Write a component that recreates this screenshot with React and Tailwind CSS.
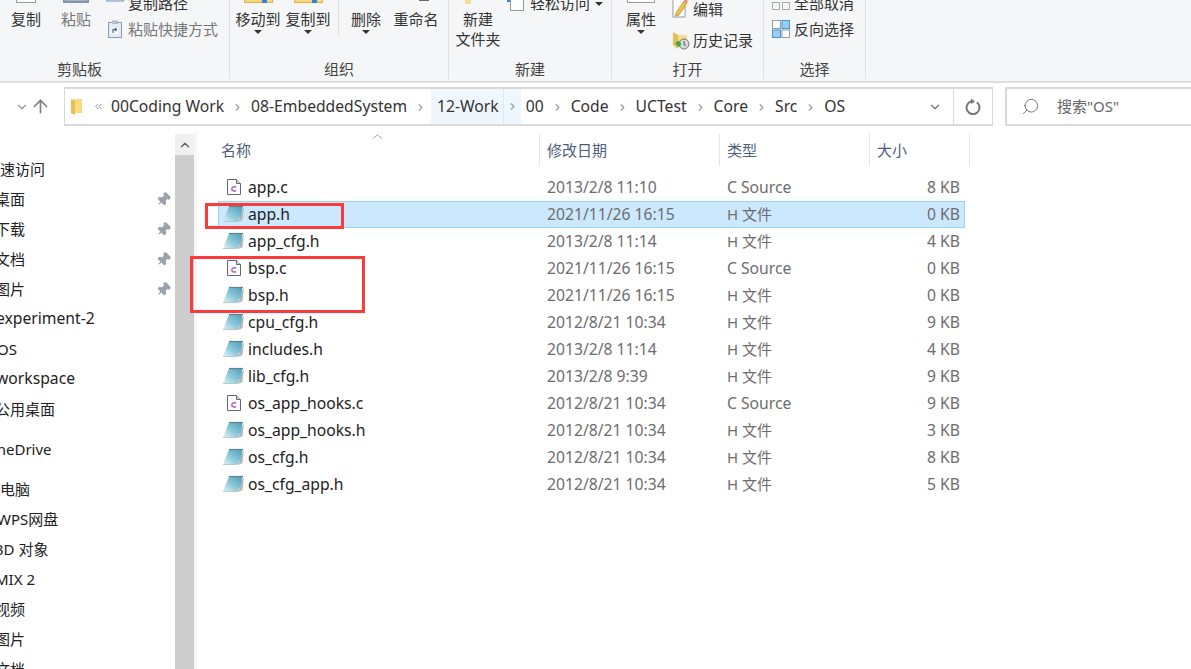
import React from 'react';
import { ArrowUp, ChevronDown, ChevronRight, ChevronUp, ChevronsLeft, Search, Pin } from 'lucide-react';

const files = [
  ['app.c', '2013/2/8 11:10', 'C Source', '8 KB'],
  ['app.h', '2021/11/26 16:15', 'H 文件', '0 KB'],
  ['app_cfg.h', '2013/2/8 11:14', 'H 文件', '4 KB'],
  ['bsp.c', '2021/11/26 16:15', 'C Source', '0 KB'],
  ['bsp.h', '2021/11/26 16:15', 'H 文件', '0 KB'],
  ['cpu_cfg.h', '2012/8/21 10:34', 'H 文件', '9 KB'],
  ['includes.h', '2013/2/8 11:14', 'H 文件', '4 KB'],
  ['lib_cfg.h', '2013/2/8 9:39', 'H 文件', '9 KB'],
  ['os_app_hooks.c', '2012/8/21 10:34', 'C Source', '9 KB'],
  ['os_app_hooks.h', '2012/8/21 10:34', 'H 文件', '3 KB'],
  ['os_cfg.h', '2012/8/21 10:34', 'H 文件', '8 KB'],
  ['os_cfg_app.h', '2012/8/21 10:34', 'H 文件', '5 KB'],
];

// name, left offset + size, pinned, extra gap above
const navItems = [
  ['快速访问', 'ml-[-15px]', false, ''],
  ['桌面', 'ml-[-5px]', true, ''],
  ['下载', 'ml-[-5px]', true, ''],
  ['文档', 'ml-[-5px]', true, ''],
  ['图片', 'ml-[-5px]', true, ''],
  ['experiment-2', 'ml-[-4px] text-[15.7px]', false, ''],
  ['OS', 'ml-[-3px]', false, ''],
  ['workspace', 'ml-[-4px] text-[15.7px]', false, ''],
  ['公用桌面', 'ml-[-5px]', false, ''],
  ['OneDrive', 'ml-[-15px]', false, 'mt-[10px]'],
  ['此电脑', 'ml-[-15px]', false, 'mt-[10px]'],
  ['WPS网盘', 'ml-[-3px]', false, ''],
  ['3D 对象', 'ml-[-5px]', false, ''],
  ['MIX 2', 'ml-[-5px]', false, ''],
  ['视频', 'ml-[-5px]', false, ''],
  ['图片', 'ml-[-5px]', false, ''],
  ['文档', 'ml-[-5px]', false, ''],
];

const crumbs = ['00Coding Work', '08-EmbeddedSystem', '12-Work', '00', 'Code', 'UCTest', 'Core', 'Src', 'OS'];

function CFileIcon() {
  return (
    <svg width="16" height="18" viewBox="0 0 16 18" className="shrink-0">
      <path d="M1.5 1.5H10.5L14.5 5.5V16.5H1.5Z" fill="#fbfbfd" stroke="#66666e" />
      <path d="M10.5 1.5V5.5H14.5" fill="#dcdce2" stroke="#66666e" />
      <path d="M10 9.2C8.4 8.3 5.8 8.8 5.8 10.9C5.8 13 8.4 13.5 10 12.6" fill="none" stroke="#a45fb8" strokeWidth="1.4" />
    </svg>
  );
}

function HFileIcon({ id }) {
  return (
    <svg width="23" height="18" viewBox="0 0 23 18" className="shrink-0">
      <defs>
        <linearGradient id={id} x1="0" y1="1" x2="1" y2="0">
          <stop offset="0" stopColor="#e2f3f7" />
          <stop offset="0.45" stopColor="#8cc9da" />
          <stop offset="1" stopColor="#4d9db9" />
        </linearGradient>
      </defs>
      <path d="M22 2L20.5 15L17 17L16 11Z" fill="#b4babd" />
      <path d="M7 1.5H20.5L18.5 12.5L15.5 16.5H1Z" fill={`url(#${id})`} />
      <path d="M15.5 16.5L16.5 12.5L18.5 12.5Z" fill="#f4f6f6" stroke="#9aa5a9" strokeWidth="0.5" />
      <path d="M7 1.5H21" stroke="#66808a" strokeWidth="1.2" />
      <path d="M1 16.5H15.5" stroke="#a9c0c8" strokeWidth="0.8" />
    </svg>
  );
}

function Caret() {
  return <span className="block w-0 h-0 border-x-[4px] border-x-transparent border-t-[4px] border-t-[#333]" />;
}

// big ribbon button, the window is cropped so only the icon's bottom edge shows
function BigButton({ label, width, caret, icon }) {
  return (
    <div className={`flex flex-col items-center ${width}`}>
      <div className="h-[9px] mt-[-6px] flex justify-center">{icon}</div>
      <span className="leading-[20px] mt-[6px] whitespace-nowrap">{label}</span>
      {caret && <span className="mt-[1px]"><Caret /></span>}
    </div>
  );
}

function FolderEdge() {
  return (
    <div className="relative w-[29px] h-[9px] bg-[#fad978] border border-[#dcb04e]">
      <span className="absolute right-[5px] top-[2px] w-[5px] h-[6px] bg-[#2f86d8]" />
    </div>
  );
}

function RibbonGroup({ label, width, labelClass, children }) {
  return (
    <div className={`flex flex-col h-[79px] border-r border-[#dfe0e1] ${width}`}>
      <div className="h-[59px] flex overflow-hidden">{children}</div>
      <div className={`text-center text-[15px] leading-[20px] text-[#444] ${labelClass || ''}`}>{label}</div>
    </div>
  );
}

function Ribbon() {
  return (
    <div className="h-[83px] flex bg-[#f5f6f7] border-b-2 border-[#dedfe0] text-[15px] text-[#333]">
      <RibbonGroup label="剪贴板" width="w-[230px]" labelClass="pr-[70px]">
        <div className="w-[52px] flex justify-center">
          <BigButton label="复制" width="w-[30px]" icon={<div className="w-[20px] bg-white border border-[#999]" />} />
        </div>
        <div className="w-[48px] flex justify-center text-[#777]">
          <BigButton label="粘贴" width="w-[30px]" icon={<div className="w-[26px] bg-[#a9b3c6] border-2 border-[#8593ad]" />} />
        </div>
        <div className="ml-[6px] flex flex-col gap-[6px] mt-[-7px]">
          <div className="flex items-center gap-[4px] h-[20px]">
            <svg width="18" height="20" viewBox="0 0 18 20">
              <rect x="0.5" y="-6" width="17" height="14" fill="#dbe8f5" stroke="#7d97b5" />
              <path d="M4.5 2L7 7M8 2L10.5 7M12 6.5H15" stroke="#334" />
            </svg>
            <span>复制路径</span>
          </div>
          <div className="flex items-center gap-[4px] h-[20px] text-[#777]">
            <div className="w-[18px] flex justify-center">
              <svg width="14" height="18" viewBox="0 0 14 18">
                <rect x="0.5" y="2.5" width="13" height="15" fill="#e5ebf3" stroke="#8b9bb3" />
                <rect x="4" y="0.5" width="6" height="3.5" fill="#b3bccb" />
                <rect x="3.5" y="7" width="7" height="7" fill="#fff" />
                <path d="M5 13V9.5H9M9 9.5L7 8M9 9.5L7 11" fill="none" stroke="#5b6f8e" strokeWidth="1.3" />
              </svg>
            </div>
            <span>粘贴快捷方式</span>
          </div>
        </div>
      </RibbonGroup>
      <RibbonGroup label="组织" width="w-[219px]">
        <div className="pl-[6px] flex gap-[6px]">
          <BigButton label="移动到" width="w-[44px]" caret icon={<FolderEdge />} />
          <BigButton label="复制到" width="w-[44px]" caret icon={<FolderEdge />} />
        </div>
        <div className="ml-[8px] w-px h-[35px] bg-[#dfe0e1]" />
        <div className="ml-[12px]">
          <BigButton
            label="删除"
            width="w-[30px]"
            caret
            icon={
              <div className="w-[24px] flex justify-between items-end h-[8px] mt-[-6px]">
                <span className="w-[2px] h-[2px] bg-[#b3243a]" />
                <span className="w-[2px] h-[2px] bg-[#b3243a]" />
              </div>
            }
          />
        </div>
        <div className="ml-[13px]">
          <BigButton
            label="重命名"
            width="w-[44px]"
            icon={<div className="w-[10px] h-[2px] mt-[5px] ml-[16px] bg-[#666]" />}
          />
        </div>
      </RibbonGroup>
      <RibbonGroup label="新建" width="w-[163px]">
        <div className="w-[58px] flex flex-col items-center leading-[20px] relative">
          <span className="absolute left-[16px] top-0 w-[6px] h-[4px] bg-[#f7dd93]" />
          <span className="mt-[9px]">新建</span>
          <span>文件夹</span>
        </div>
        <div className="ml-[3px] flex items-start gap-[6px]">
          <span className="relative w-[14px] h-[11px] bg-white border border-[#999] border-t-0">
            <span className="absolute left-[-4px] top-0 w-[3px] h-[2px] bg-[#2f86d8]" />
          </span>
          <span className="mt-[-7px] leading-[20px] whitespace-nowrap">轻松访问</span>
          <span className="mt-[2px] ml-[-1px]"><Caret /></span>
        </div>
      </RibbonGroup>
      <RibbonGroup label="打开" width="w-[152px]">
        <div className="pl-[14px]">
          <BigButton label="属性" width="w-[30px]" caret icon={<div className="w-[28px] bg-white border border-[#999]" />} />
        </div>
        <div className="ml-[16px] flex flex-col gap-[9px]">
          <div className="flex gap-[5px] items-start h-[20px]">
            <svg width="16" height="18" viewBox="0 0 16 18">
              <path d="M1 -1H13V17H1Z" fill="#fff" stroke="#999" />
              <path d="M4 13L12 1L15 3L7 15L3.5 16Z" fill="#f2c04c" stroke="#b3862b" strokeWidth="0.7" />
              <path d="M12 1L13 -1L16 1L15 3Z" fill="#e58a8a" />
            </svg>
            <span className="leading-[18px]">编辑</span>
          </div>
          <div className="flex gap-[3px] items-center h-[20px] mt-[1px]">
            <svg width="18" height="19" viewBox="0 0 18 19">
              <path d="M1 1L6 4V18L1 14Z" fill="#e8bd55" />
              <path d="M6 4H15V12H6Z" fill="#f8dc8a" />
              <circle cx="12" cy="13" r="5" fill="#d8dadb" stroke="#777" />
              <path d="M12 10V13.5L14 14.5" fill="none" stroke="#555" />
              <path d="M3 12L7 9.5V11.5H9V14.5H7V16.5Z" fill="#3ea63a" />
            </svg>
            <span>历史记录</span>
          </div>
        </div>
      </RibbonGroup>
      <RibbonGroup label="选择" width="w-[102px]">
        <div className="ml-[8px] flex flex-col gap-[6px] mt-[-7px]">
          <div className="flex items-center gap-[4px] h-[20px]">
            <span className="flex gap-[2px] w-[18px] h-[8px] self-end mb-[3px]">
              <i className="w-[8px] border border-[#aaa]" />
              <i className="w-[8px] border border-[#aaa]" />
            </span>
            <span>全部取消</span>
          </div>
          <div className="flex items-center gap-[4px] h-[20px]">
            <svg width="18" height="18" viewBox="0 0 18 18">
              <rect x="0.5" y="0.5" width="8" height="8" fill="#fff" stroke="#9a9a9a" />
              <rect x="10" y="0.5" width="7.5" height="8" fill="#9fcdf2" stroke="#3b97e0" />
              <rect x="0.5" y="10" width="8" height="7.5" fill="#9fcdf2" stroke="#3b97e0" />
              <rect x="10" y="10" width="7.5" height="7.5" fill="#fff" stroke="#9a9a9a" />
            </svg>
            <span>反向选择</span>
          </div>
        </div>
      </RibbonGroup>
    </div>
  );
}

function AddressRow() {
  return (
    <div className="h-[49px] flex items-start pt-[4px] bg-white">
      <div className="w-[64px] h-[39px] flex items-center shrink-0">
        <ChevronDown size={14} strokeWidth={2.2} className="ml-[15px] text-[#999]" />
        <ArrowUp size={21} strokeWidth={1.9} className="ml-[1px] text-[#808080]" />
      </div>
      <div className="w-[929px] h-[39px] flex border-2 border-[#d9d9d9] border-x-0 shrink-0">
        <div className="flex-1 flex items-center border-l border-[#d9d9d9] min-w-0">
          <svg width="13" height="18" viewBox="0 0 13 18" className="ml-[5px] shrink-0">
            <path d="M3 1H12V15H3Z" fill="#f9dc82" />
            <path d="M1 1L5 3V17L1 15Z" fill="#e8bf52" />
          </svg>
          <ChevronsLeft size={11} strokeWidth={2} className="ml-[10px] text-[#888]" />
          <div className="ml-[7px] flex items-stretch h-full text-[15.7px] text-[#333] whitespace-nowrap pt-[1px]">
            {crumbs.map((c, i) => {
              const hot = c === '12-Work';
              return (
                <div key={c} className={`flex items-center ${hot ? 'bg-[#eff7fe] ml-[-3px] mr-[5px] mt-[-1px]' : ''}`}>
                  <span className={`flex items-center h-full ${hot ? 'pl-[6px] pr-[4px] border-r border-[#d9ebf9]' : ''}`}>{c}</span>
                  {i < crumbs.length - 1 && (
                    <ChevronRight
                      size={11}
                      strokeWidth={2.4}
                      className={`text-[#999] ${hot ? 'mx-[3px]' : 'mx-[8px]'}`}
                    />
                  )}
                </div>
              );
            })}
          </div>
        </div>
        <div className="w-[38px] flex items-center justify-center border-r border-[#d9d9d9] shrink-0">
          <ChevronDown size={14} strokeWidth={2.2} className="text-[#777]" />
        </div>
        <div className="w-[39px] flex items-center justify-center border-r border-[#d9d9d9] shrink-0">
          <svg width="18" height="18" viewBox="0 0 18 18" fill="none">
            <path d="M12.8 4.2A6.5 6.5 0 1 1 7.5 3.2" stroke="#777" strokeWidth="2" />
            <path d="M7 0.5L11 3.4L7 6Z" fill="#777" />
          </svg>
        </div>
      </div>
      <div className="ml-[12px] flex-1 h-[39px] flex items-center border-2 border-r-0 border-[#d9d9d9] text-[15px] text-[#666]">
        <Search size={19} strokeWidth={1.1} className="ml-[14px] text-[#666] -scale-x-100" />
        <span className="ml-[17px]">搜索"OS"</span>
      </div>
    </div>
  );
}

function Sidebar() {
  return (
    <div className="w-[197px] shrink-0 flex overflow-hidden">
      <div className="w-[175px] shrink-0 pt-[22px] text-[15px] text-[#222]">
        {navItems.map(([name, offset, pinned, gap], i) => (
          <div key={i} className={`h-[30px] flex items-center justify-between ${gap}`}>
            <span className={`whitespace-nowrap ${offset}`}>{name}</span>
            {pinned && <Pin size={15} strokeWidth={2} className="mr-[4px] rotate-45 text-[#9aa3ab] fill-[#9aa3ab]" />}
          </div>
        ))}
      </div>
      <div className="w-[19px] shrink-0 mt-[2px] bg-[#cdcdcd] h-[600px]">
        <div className="h-[21px] bg-[#f0f0f0] flex items-center justify-center">
          <ChevronUp size={14} strokeWidth={2.4} className="text-[#606060]" />
        </div>
      </div>
      <div className="w-[3px] shrink-0 bg-[#f7f7f7]" />
    </div>
  );
}

function FileList() {
  return (
    <div className="flex-1 relative text-[15.7px]">
      <div className="relative flex h-[32px] mt-[2px] text-[#4c607a] text-[15px]">
        <ChevronUp size={13} strokeWidth={1.2} className="absolute left-[174px] top-[-4px] text-[#888] scale-x-[1.3]" />
        <div className="w-[343px] pl-[24px] pt-[1px] flex items-center border-r border-[#e5e5e5]">名称</div>
        <div className="w-[180px] pl-[7px] pt-[1px] flex items-center border-r border-[#e5e5e5]">修改日期</div>
        <div className="w-[150px] pl-[7px] pt-[1px] flex items-center border-r border-[#e5e5e5]">类型</div>
        <div className="w-[100px] pl-[7px] pt-[1px] flex items-center border-r border-[#e5e5e5]">大小</div>
      </div>
      <div className="mt-[8px] ml-[21px] w-[747px]">
        {files.map(([name, date, type, size]) => (
          <div
            key={name}
            className={`h-[27px] flex items-center border ${name === 'app.h' ? 'bg-[#cce8ff] border-[#99d1ff]' : 'border-transparent'}`}
          >
            <div className="w-[328px] flex items-center">
              <div className="w-[29px] flex justify-center shrink-0">
                {name.endsWith('.c') ? <CFileIcon /> : <HFileIcon id={`h-${name}`} />}
              </div>
              <span className="text-[#222] whitespace-nowrap">{name}</span>
            </div>
            <div className="w-[180px] text-[#6d6d6d]">{date}</div>
            <div className={`w-[150px] text-[#6d6d6d] ${type === 'H 文件' ? 'text-[15px]' : ''}`}>{type}</div>
            <div className="w-[83px] text-right text-[#6d6d6d]">{size}</div>
          </div>
        ))}
      </div>
      {/* red annotation boxes drawn over the list */}
      <div className="absolute left-[8px] top-[71px] w-[139px] h-[26px] border-[3px] border-[#fb3b3b]" />
      <div className="absolute left-[-7px] top-[124px] w-[175px] h-[57px] border-[3px] border-[#fb3b3b]" />
    </div>
  );
}

export default function App() {
  return (
    <div className="h-[669px] w-[1191px] overflow-hidden bg-white font-['Noto_Sans','Noto_Sans_CJK_SC',sans-serif]">
      <Ribbon />
      <AddressRow />
      <div className="flex h-[537px]">
        <Sidebar />
        <FileList />
      </div>
    </div>
  );
}
